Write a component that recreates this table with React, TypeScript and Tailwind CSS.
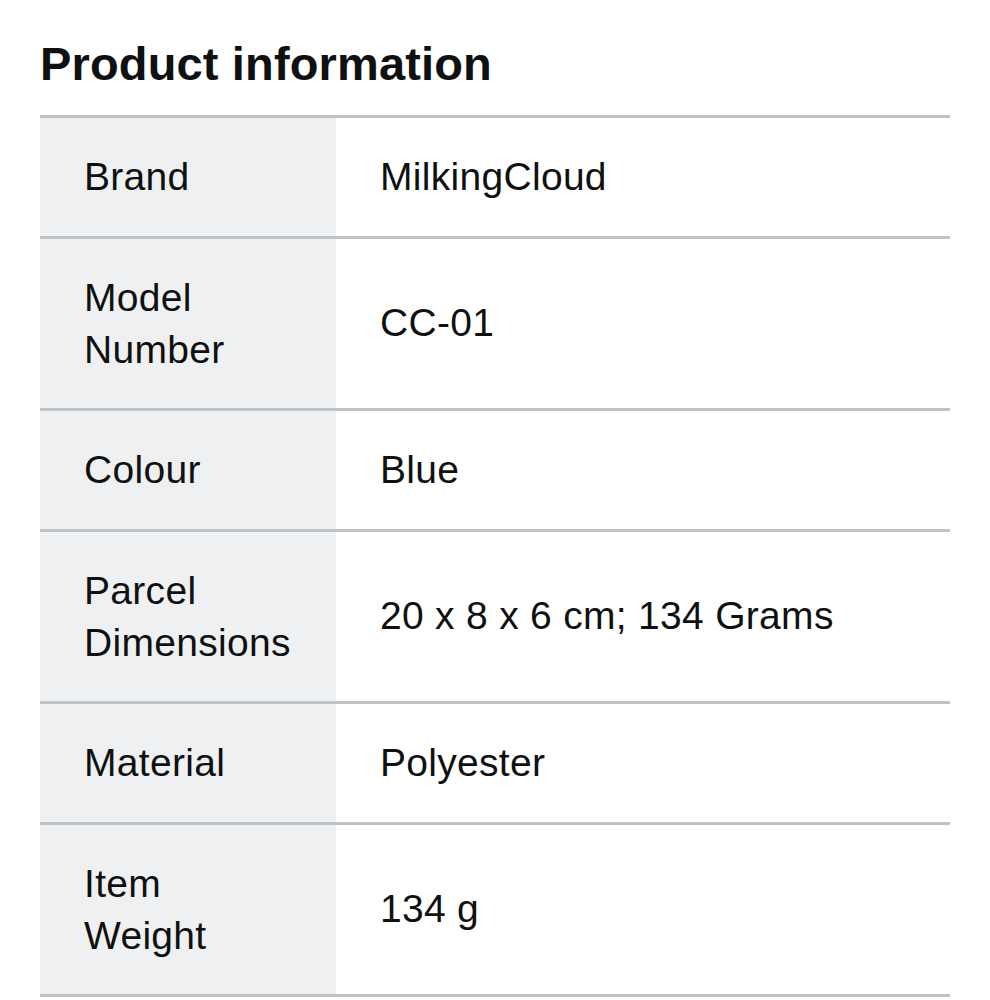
const rows: [string[], string][] = [
  [["Brand"], "MilkingCloud"],
  [["Model", "Number"], "CC-01"],
  [["Colour"], "Blue"],
  [["Parcel", "Dimensions"], "20 x 8 x 6 cm; 134 Grams"],
  [["Material"], "Polyester"],
  [["Item", "Weight"], "134 g"],
];

export default function App() {
  return (
    <div className="min-h-screen bg-white px-[40px] pt-[36px] font-['Liberation_Sans',Arial,sans-serif] text-[#0f1111]">
      <h2 className="text-[47px] font-bold leading-[56px] tracking-[0.15px]">Product information</h2>
      <div className="mt-[23px] w-[910px] border-t-[3px] border-[#c0c3c5]">
        {rows.map(([label, value]) => (
          <div key={label.join(" ")} className="flex border-b-[3px] border-[#c0c3c5]">
            <div className="w-[296px] shrink-0 bg-[#eff0f2] pt-[33px] pb-[32.5px] pl-[44px] pr-[20px] text-[39px] leading-[52px] tracking-[0.3px]">
              {label.map((line) => (
                <div key={line}>{line}</div>
              ))}
            </div>
            <div className="flex flex-1 items-center pl-[44px] text-[39px] leading-[52px] tracking-[0.3px]">
              {value}
            </div>
          </div>
        ))}
      </div>
    </div>
  );
}
